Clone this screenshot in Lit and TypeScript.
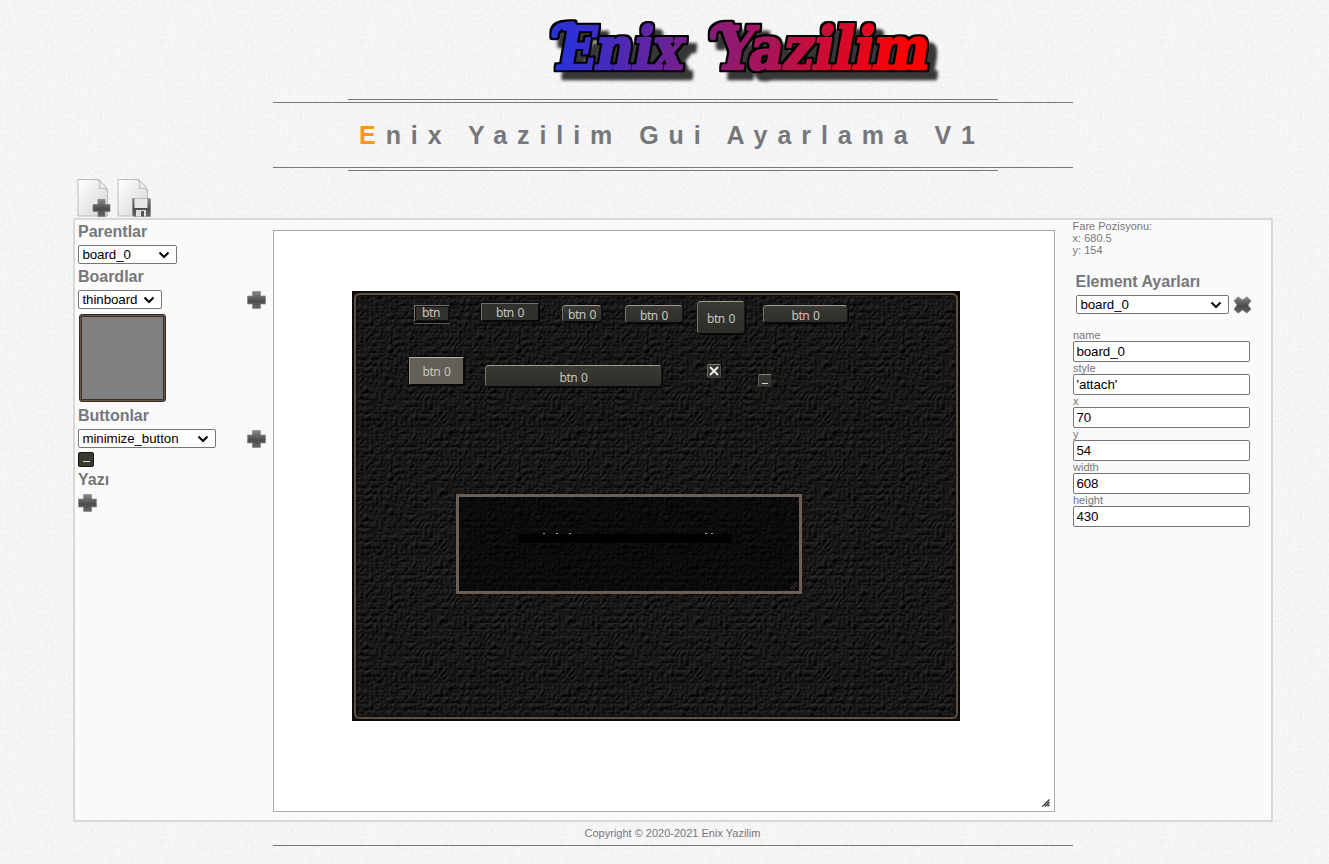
import { LitElement, html, css, svg, unsafeCSS } from "lit";
import { customElement } from "lit/decorators.js";

const asUrl = (s: string) => unsafeCSS(`url("data:image/svg+xml,${encodeURIComponent(s)}")`);

const paper = asUrl(
  `<svg xmlns="http://www.w3.org/2000/svg" width="200" height="200"><filter id="f" x="0" y="0" width="100%" height="100%" color-interpolation-filters="sRGB"><feTurbulence type="fractalNoise" baseFrequency=".35" numOctaves="3" seed="4" stitchTiles="stitch"/><feColorMatrix values=".06 0 0 0 .93 .06 0 0 0 .93 .06 0 0 0 .93 0 0 0 0 1"/></filter><rect width="200" height="200" filter="url(#f)"/></svg>`
);
const leather = asUrl(
  `<svg xmlns="http://www.w3.org/2000/svg" width="128" height="128"><filter id="f" x="0" y="0" width="100%" height="100%" color-interpolation-filters="sRGB"><feTurbulence type="turbulence" baseFrequency=".2 .15" numOctaves="6" seed="23" stitchTiles="stitch" result="n"/><feColorMatrix in="n" values="0 0 0 0 0 0 0 0 0 0 0 0 0 0 0 .7 .3 0 0 0"/><feDiffuseLighting surfaceScale="1.5" lighting-color="#373635"><feDistantLight azimuth="240" elevation="26"/></feDiffuseLighting></filter><rect width="128" height="128" filter="url(#f)"/></svg>`
);
const chevron = asUrl(
  `<svg xmlns="http://www.w3.org/2000/svg" width="12" height="8"><path d="M1.500 1.500 6 6l4.500-4.500" fill="none" stroke="#000" stroke-width="2"/></svg>`
);

const plus = html`<svg class="glyph" width="19" height="18" viewBox="0 0 19 18">
  <defs><linearGradient id="g" x2="0" y2="1"><stop stop-color="#8a8a8a" /><stop offset=".45" stop-color="#777" /><stop offset=".55" stop-color="#585858" /><stop offset="1" stop-color="#757575" /></linearGradient></defs>
  <path d="M5.500.5h8v4.500h5v8h-5v4.500h-8v-4.500h-5v-8h5z" fill="url(#g)" stroke="#888" stroke-opacity=".7" stroke-linejoin="round" />
</svg>`;

const cross = html`<svg class="glyph" width="19" height="18" viewBox="0 0 19 18">
  <defs><linearGradient id="g" x2="0" y2="1"><stop stop-color="#808080" /><stop offset=".5" stop-color="#555" /><stop offset="1" stop-color="#6a6a6a" /></linearGradient></defs>
  <path d="M5 .8 9.500 4 14 .8l4 4L15 9l3 4.200-4 4L9.500 14 5 17.200l-4-4L4 9 1 4.800z" fill="url(#g)" stroke="#888" stroke-opacity=".7" stroke-linejoin="round" />
</svg>`;

const page = (extra: unknown) => html`<svg class="page" width="36" height="40" viewBox="0 0 36 40">
  <defs>
    <linearGradient id="p" x2="1" y2="1"><stop stop-color="#fff" /><stop offset="1" stop-color="#d5d5d5" /></linearGradient>
    <linearGradient id="g" x2="0" y2="1"><stop stop-color="#888" /><stop offset=".55" stop-color="#4d4d4d" /><stop offset="1" stop-color="#666" /></linearGradient>
  </defs>
  <path d="M2 1.500h20c3 2 8 7 9.500 11v25.500H2z" fill="url(#p)" stroke="#bcbcbc" />
  <path d="M22 1.500c2.500 2 2 6 1.500 9 3-.6 6-.2 8 2C30 8 25 3.500 22 1.500z" fill="#eee" stroke="#aaa" stroke-width=".8" />
  ${extra}
</svg>`;
const newPage = page(svg`<path d="M22 21.500h7v5h5v7h-5v5h-7v-5h-5v-7h5z" fill="url(#g)" stroke="#777" stroke-opacity=".7" stroke-linejoin="round"/>`);
const savePage = page(svg`<path d="M16.500 20.500h17l1 1v17H18l-1.500-1.500z" fill="url(#g)" stroke="#888" stroke-width=".8"/><path d="M18.500 20.500h13v9.500h-13z" fill="#e6e6e6"/><path d="M20 32h10v6.500H20z" fill="#ddd"/><path d="M25 33h3v5.500h-3z" fill="#555"/>`);

interface Btn { x: number; y: number; w: number; h: number; kind: string; text: string }
const buttons: Btn[] = [
  { x: 62, y: 14, w: 36, h: 17, kind: "square lined", text: "btn" },
  { x: 129, y: 12, w: 58, h: 18, kind: "square", text: "btn 0" },
  { x: 210, y: 14, w: 40, h: 17, kind: "round", text: "btn 0" },
  { x: 273, y: 14, w: 58, h: 18, kind: "round", text: "btn 0" },
  { x: 345, y: 10, w: 48, h: 33, kind: "round", text: "btn 0" },
  { x: 411, y: 14, w: 85, h: 18, kind: "round", text: "btn 0" },
  { x: 57, y: 66, w: 55, h: 28, kind: "square light", text: "btn 0" },
  { x: 133, y: 74, w: 177, h: 22, kind: "round", text: "btn 0" },
];
const fields = [["name", "board_0"], ["style", "'attach'"], ["x", "70"], ["y", "54"], ["width", "608"], ["height", "430"]];

const logoWords = svg`
  <text x="554" y="69" textLength="127" lengthAdjust="spacingAndGlyphs">Enix</text>
  <text x="713" y="69" textLength="214" lengthAdjust="spacingAndGlyphs">Yazilim</text>`;

@customElement("app-root")
export class AppRoot extends LitElement {
  static styles = css`
    :host { display: block; height: 864px; overflow: hidden; background: #f5f5f5 ${paper}; font: 11px/12px "Liberation Sans", Arial, sans-serif; color: #76777b; }
    * { box-sizing: border-box; }
    svg { display: block; }
    .logo { margin: 0 0 0 540px; overflow: visible; }
    .logo text { font: bold 59px "DejaVu Serif", serif; }
    .rule { height: 1px; margin: 0 auto; width: 800px; background: #77777a; }
    .rule.short { width: 650px; }
    .head { display: flex; flex-direction: column; width: 800px; margin-left: 273px; }
    h1 { margin: 0; height: 64px; font-size: 25px; line-height: 64px; letter-spacing: 9.93px; padding-right: 2px; text-align: center; white-space: nowrap; }
    h1 span { color: #ff931e; }
    .gap { height: 2px; }
    .tools { display: flex; gap: 4px; height: 47px; padding: 7px 0 0 76px; }
    .main { display: grid; grid-template-columns: 198px 782px 1fr; width: 1200px; height: 604px; margin-left: 73px; border: 2px solid #d8d8d8; background: #fafafa; }
    .left { padding-left: 3px; }
    h2 { margin: 0; font-size: 16px; line-height: 23px; height: 23px; letter-spacing: -.02px; }
    .row { display: flex; justify-content: space-between; height: 22px; padding: 2px 7px 0 0; }
    .row .glyph { margin-top: 1px; }
    select, input { font: 13.333px "Liberation Sans", Arial, sans-serif; letter-spacing: -.06px; margin: 0; color: #000; background: #fff; border: 1px solid #767676; border-radius: 2px; }
    select { appearance: none; height: 19px; padding: 0 0 0 3.4px; background: #fff ${chevron} no-repeat right 6px center; }
    .w99 { width: 99px; } .w84 { width: 84px; } .w138 { width: 138px; } .w152 { width: 153px; }
    .preview { width: 87px; height: 88px; margin: 4px 0 2px 1px; border: 1px solid #302a27; border-radius: 3px; background: #808080; box-shadow: inset 0 0 0 1px #665948, inset 0 0 0 2px #3f3026; }
    .mini { width: 16px; height: 15px; margin: 3px 0 1px; border: 1px solid #151510; border-radius: 2px; background: #393a31; padding: 8px 3px 0 4px; }
    .mini::after { content: ""; display: block; height: 1px; background: #ddd8c8; }
    .add { padding-top: 3px; }
    .canvas { position: relative; height: 582px; margin-top: 10px; border: 1px solid #a9a9a9; background: #fff; }
    .grip { position: absolute; right: 4px; bottom: 4px; }
    .board { position: absolute; left: 78px; top: 60px; width: 608px; height: 430px; border: 2px solid #0b0a09; background: #151514 ${leather}; }
    .edge { position: absolute; inset: 0; border: 2px solid #5c5044; border-radius: 6px; box-shadow: inset 0 0 0 1px #100e0d; }
    .btn { position: absolute; margin: -2px 0 0 -2px; display: flex; align-items: center; justify-content: center; color: #c9c5bd; font: 12px/14px "Noto Sans", sans-serif; letter-spacing: -.4px; word-spacing: 1px; white-space: nowrap; padding-top: 1px; }
    .square { border: 1px solid; border-color: #77736a #080808 #080808 #77736a; background: #30302d; box-shadow: 0 0 0 1px #080808; }
    .lined { background: #33312b; box-shadow: inset 0 0 0 1px #11110f, 0 1px 0 #080808, 0 2px 0 #5c5a52; padding: 0 2px 1px 0; }
    .light { background: #625f56; border-color: #bab6ab #080808 #080808 #8b887b; }
    .round { border: 1px solid; border-color: #a09c91 #181815 #0b0b0a #77756a; border-radius: 4px; background: linear-gradient(#3a3933, #2d2e28); box-shadow: 1px 1px 0 #050505; padding-top: 3px; }
    .sys { position: absolute; width: 14px; height: 14px; border: 1px solid; border-color: #858275 #222 #111 #5c5b53; border-radius: 2px; background: #35342f; }
    .close { left: 353px; top: 71px; border-color: #858275 #55534d #444 #6c6b63; }
    .min { left: 404px; top: 81px; padding: 8px 3px 0; }
    .min::after { content: ""; display: block; height: 1px; background: #d6d3c5; }
    .box { position: absolute; left: 102px; top: 201px; width: 346px; height: 100px; border: 3px solid #6a6056; background: rgba(0,0,0,.5); }
    .bar { position: absolute; left: 60px; top: 37px; width: 212px; height: 9px; background: #000; }
    .ticks { position: absolute; left: 84px; top: 36px; }
    .boxgrip { position: absolute; right: 2px; bottom: 2px; opacity: .3; }
    .right { padding-left: 17px; }
    .mouse { padding-left: .6px; }
    .settings { padding: 14px 0 15px 4px; }
    .settings h2 { margin-left: -.5px; }
    .pick { display: flex; gap: 4px; padding-top: 2px; height: 21px; }
    .pick .glyph { margin-top: 1px; }
    .form { padding-left: 1px; }
    label { display: block; height: 33px; }
    input { display: block; width: 177px; height: 21px; padding: 1px 2px 1px 2.4px; outline: none; }
    .foot { text-align: center; width: 799px; margin-left: 273px; padding-top: 5px; height: 23px; }
  `;

  private pick(value: string, cls: string) {
    return html`<select class=${cls}><option>${value}</option></select>`;
  }

  render() {
    return html`
      <svg class="logo" width="410" height="99" viewBox="540 0 410 99" role="img" aria-label="Enix Yazilim">
        <defs>
          <linearGradient id="lg" gradientUnits="userSpaceOnUse" x1="560" x2="905" y1="0" y2="0"><stop stop-color="#2a31d8" /><stop offset="1" stop-color="#f00" /></linearGradient>
          <filter id="sh" filterUnits="userSpaceOnUse" x="540" y="0" width="410" height="99" color-interpolation-filters="sRGB">
            <feMorphology in="SourceAlpha" operator="dilate" radius=".6" result="fat" />
            <feFlood flood-color="url(#lg)" result="c" />
            <feDropShadow in="SourceGraphic" dx="8" dy="8" stdDeviation="1.6" flood-color="#000" flood-opacity=".78" />
          </filter>
          <filter id="outline" filterUnits="userSpaceOnUse" x="540" y="0" width="410" height="99" color-interpolation-filters="sRGB">
            <feMorphology in="SourceAlpha" operator="dilate" radius="2" result="o" />
            <feMerge><feMergeNode in="o" /><feMergeNode in="SourceGraphic" /></feMerge>
          </filter>
        </defs>
        <g filter="url(#sh)">
          <g filter="url(#outline)">
            <g fill="url(#lg)" stroke="url(#lg)" stroke-width="2.600" stroke-linejoin="round" transform="translate(12.300 0) skewX(-10)">${logoWords}</g>
            <g fill="none" stroke="url(#lg)" stroke-width="6.500" stroke-linecap="round"><path d="M554.500 35c0-8 7-10.500 18-10.400" /><path d="M713 37c-1-9 7-12.500 17-11.900" /></g>
          </g>
        </g>
      </svg>
      <div class="head">
        <div class="rule short"></div><div class="gap"></div><div class="rule"></div>
        <h1><span>E</span>nix Yazilim Gui Ayarlama V1</h1>
        <div class="rule"></div><div class="gap"></div><div class="rule short"></div>
      </div>
      <div class="tools">${newPage}${savePage}</div>
      <div class="main">
        <div class="left">
          <h2>Parentlar</h2>
          <div class="row">${this.pick("board_0", "w99")}</div>
          <h2>Boardlar</h2>
          <div class="row">${this.pick("thinboard", "w84")}${plus}</div>
          <div class="preview"></div>
          <h2>Buttonlar</h2>
          <div class="row">${this.pick("minimize_button", "w138")}${plus}</div>
          <div class="mini"></div>
          <h2>Yazı</h2>
          <div class="add">${plus}</div>
        </div>
        <div class="canvas">
          <div class="board">
            <div class="edge"></div>
            ${buttons.map((b) => html`<div class="btn ${b.kind}" style="left:${b.x}px;top:${b.y}px;width:${b.w}px;height:${b.h}px">${b.text}</div>`)}
            <div class="sys close"><svg width="12" height="12" viewBox="0 0 12 12"><path d="m2 2 8 8m0-8-8 8" stroke="#f2f2f2" stroke-width="1.800" /></svg></div>
            <div class="sys min"></div>
            <div class="box">
              <svg class="ticks" width="174" height="1" viewBox="0 0 174 1"><path d="M0 .5h2M13 .5h2M26 .5h2M162 .5h2M168 .5h2" stroke="#aaa69a" /></svg>
              <div class="bar"></div>
              <svg class="boxgrip" width="7" height="7" viewBox="0 0 7 7"><path d="M0 7 7 0M3 7l4-4" stroke="#aaa" /></svg>
            </div>
          </div>
          <svg class="grip" width="9" height="9" viewBox="0 0 9 9"><path d="M1.500 8.500l7-7M4 8.500 8.500 4M6.500 8.500l2-2" stroke="#333" stroke-width="1.200" /></svg>
        </div>
        <div class="right">
          <div class="mouse">Fare Pozisyonu:<br />x: 680.5<br />y: 154</div>
          <div class="settings">
            <h2>Element Ayarları</h2>
            <div class="pick">${this.pick("board_0", "w152")}${cross}</div>
          </div>
          <div class="form">${fields.map(([k, v]) => html`<label>${k}<input .value=${v} /></label>`)}</div>
        </div>
      </div>
      <div class="foot">Copyright © 2020-2021 Enix Yazilim</div>
      <div class="head"><div class="rule"></div></div>
    `;
  }
}
